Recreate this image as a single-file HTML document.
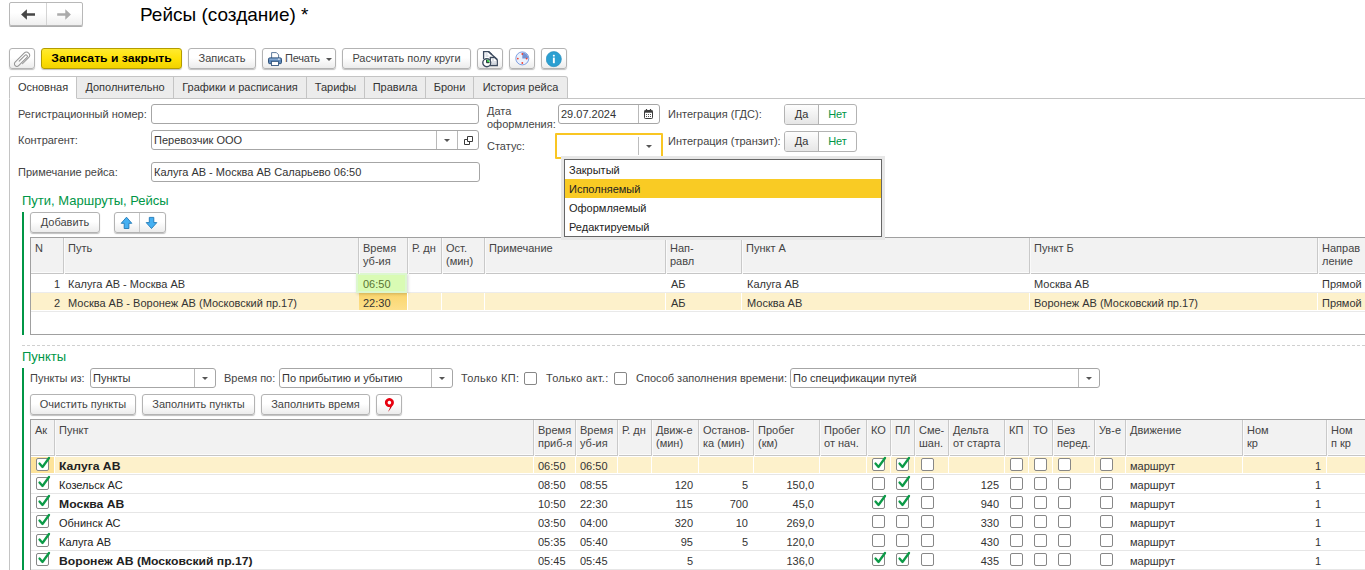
<!DOCTYPE html>
<html lang="ru"><head><meta charset="utf-8"><title>Рейсы (создание) *</title>
<style>
*{box-sizing:border-box;margin:0;padding:0}
html,body{width:1365px;height:570px;overflow:hidden;background:#fff}
body{font-family:"Liberation Sans",Arial,sans-serif;font-size:11px;color:#333;position:relative;line-height:13px}
.a{position:absolute;white-space:nowrap}
.btn{position:absolute;height:21px;border:1px solid #b3b3b3;border-radius:3px;background:linear-gradient(#fff,#fff 45%,#ececec);box-shadow:0 1px 1px rgba(0,0,0,.25);text-align:center;line-height:19px;white-space:nowrap;color:#444}
.inp{position:absolute;height:20px;border:1px solid #a6a6a6;border-radius:3px;background:#fff;line-height:18px;padding-left:2px;white-space:nowrap;color:#333}
.lbl{position:absolute;white-space:nowrap;color:#444}
.tab{position:absolute;top:76px;height:23px;border:1px solid #c4c4c4;border-left:none;background:#ececec;line-height:21px;text-align:center;color:#333}
.tab.act{background:#fff;border-left:1px solid #c4c4c4;border-bottom-color:#fff;border-radius:3px 0 0 0}
.grn{color:#009646;font-size:13px}
.dd{position:absolute;top:0;bottom:0;border-left:1px solid #b9b9b9}
.tri{position:absolute;width:0;height:0;border-left:3px solid transparent;border-right:3px solid transparent;border-top:3px solid #555}
.bx{display:inline-block;transform:scaleX(1.105);transform-origin:0 50%}
.cb{position:absolute;width:13px;height:13px;border:1px solid #878787;border-radius:2px;background:#fff}
</style></head><body>
<!-- SECTION: header -->
<div class="a" style="left:9px;top:2px;width:74px;height:24px;border:1px solid #b8b8b8;border-radius:2px;background:linear-gradient(#fff,#fff 45%,#efefef);box-shadow:0 1px 0 #adadad">
<div class="a" style="left:36px;top:0;bottom:0;width:1px;background:#d4d4d4"></div>
<svg class="a" style="left:11px;top:5px" width="15" height="13" viewBox="0 0 15 13"><path d="M.1 6.500L5.900 1.200V5.200H14V7.800H5.900V11.800z" fill="#464646"/></svg>
<svg class="a" style="left:47px;top:5px" width="15" height="13" viewBox="0 0 15 13"><path d="M13.900 6.500L8.300 1.200V5.200H.2V7.800H8.300V11.800z" fill="#ababab"/></svg>
</div>
<div class="a" style="left:140px;top:3px;font-size:19px;line-height:24px;color:#000">Рейсы (создание) *</div>
<!-- SECTION: toolbar -->
<div class="btn" style="left:9px;top:48px;width:26px">
<svg class="a" style="left:0;top:0" width="24" height="19" viewBox="0 0 24 19"><path transform="translate(7.400 15.300) rotate(-45)" d="M4 3.200L12.700 3.200A3.200 3.200 0 0 0 12.700 -3.200L0 -3.200A2.500 2.500 0 0 0 0 1.800L11.700 1.800A1.400 1.400 0 0 0 11.700 -1L3.500 -1" fill="none" stroke="#939393" stroke-width="1" stroke-linecap="round"/></svg>
</div>
<div class="btn" style="left:41px;top:48px;width:141px;background:linear-gradient(#ffea30,#ffe208 50%,#f1d200);border-color:#b39c00;color:#000;font-weight:bold"><span class="bx" style="transform-origin:50% 50%">Записать и закрыть</span></div>
<div class="btn" style="left:188px;top:48px;width:68px">Записать</div>
<div class="btn" style="left:262px;top:48px;width:74px;text-align:left;padding-left:22px;letter-spacing:-.2px">Печать<span class="tri" style="left:63px;top:9px"></span>
<svg class="a" style="left:4px;top:2px" width="16" height="16" viewBox="0 0 16 16"><path d="M4.600 7V1.600H9.400L11.600 3.800V7" fill="#fff" stroke="#4d6c92" stroke-width=".9"/><rect x="1.500" y="6.900" width="13" height="5.800" rx="1.300" fill="#5d88ba" stroke="#2d5079" stroke-width="1"/><path d="M2.600 8.200h10.800" stroke="#91b2d8" stroke-width="1"/><rect x="11.200" y="7.600" width="1.400" height="1" fill="#fff"/><rect x="4.500" y="10.400" width="7" height="4.100" fill="#fff" stroke="#34577f" stroke-width=".9"/></svg>
</div>
<div class="btn" style="left:342px;top:48px;width:129px">Расчитать полу круги</div>
<div class="btn" style="left:477px;top:48px;width:26px"><svg class="a" style="left:4px;top:2px" width="17" height="17" viewBox="0 0 17 17"><path d="M1.600 8V.700H6.800L10 3.800" fill="#fff" stroke="#3e4c60" stroke-width="1.300"/><path d="M6.600 .700L15.300 8.600" stroke="#3e4c60" stroke-width="1.400"/><path d="M8.300 6.500H12.700L15.300 9V14.500H8.300z" fill="#fff" stroke="#3e4c60" stroke-width="1.300"/><path d="M3.500 3h2M3.500 5h3M10 9h2M10 11h4M10 12.800h4" stroke="#a9b4c4" stroke-width=".8"/><circle cx="4.800" cy="11.700" r="4" fill="#fff" stroke="#3e4c60" stroke-width="1.400"/><path d="M4.600 11.700V8.600A3.100 3.100 0 0 1 7.700 11.700z" fill="#3fcf4f"/><path d="M4.600 8.800V11.700H7.400" fill="none" stroke="#1d2733" stroke-width="1"/></svg></div>
<div class="btn" style="left:509px;top:48px;width:26px"><svg class="a" style="left:4px;top:1px" width="17" height="17" viewBox="0 0 17 17"><circle cx="8.300" cy="8.400" r="6.500" fill="#eaf0fc" stroke="#7f9fe0" stroke-width="1"/><path d="M8.300 8.400V2.400A6 6 0 0 1 14.300 8.400z" fill="#7492d2"/><circle cx="8.300" cy="4" r=".9" fill="#f04030"/><circle cx="12.600" cy="8.600" r=".9" fill="#f04030"/><circle cx="8.300" cy="13" r=".9" fill="#f04030"/><circle cx="3.800" cy="8.600" r=".9" fill="#f04030"/></svg></div>
<div class="btn" style="left:541px;top:48px;width:26px"><svg class="a" style="left:4px;top:2px" width="17" height="17" viewBox="0 0 17 17"><circle cx="7.800" cy="8.100" r="7.600" fill="#2b9fd1" stroke="#2489b8" stroke-width=".6"/><rect x="6.900" y="6.600" width="1.900" height="5.600" fill="#fff"/><rect x="6.900" y="3.700" width="1.900" height="1.900" rx=".6" fill="#fff"/></svg></div>
<!-- SECTION: tabs -->
<div class="a" style="left:9px;top:98px;width:1356px;height:1px;background:#c4c4c4"></div>
<div class="a" style="left:9px;top:98px;width:1px;height:473px;background:#c4c4c4"></div>
<div class="tab act" style="left:9px;width:68px">Основная</div>
<div class="tab" style="left:77px;width:97px">Дополнительно</div>
<div class="tab" style="left:174px;width:133px">Графики и расписания</div>
<div class="tab" style="left:307px;width:58px">Тарифы</div>
<div class="tab" style="left:365px;width:61px">Правила</div>
<div class="tab" style="left:426px;width:48px">Брони</div>
<div class="tab" style="left:474px;width:94px;border-radius:0 3px 0 0">История рейса</div>
<!-- SECTION: form -->
<div class="lbl" style="left:18px;top:108px">Регистрационный номер:</div>
<div class="inp" style="left:151px;top:104px;width:328px"></div>
<div class="lbl" style="left:18px;top:134px">Контрагент:</div>
<div class="inp" style="left:151px;top:130px;width:328px">Перевозчик ООО
<div class="dd" style="left:284px;width:21px"><span class="tri" style="left:7px;top:8px"></span></div>
<div class="dd" style="left:305px;width:22px"><svg class="a" style="left:6px;top:4px" width="10" height="10" viewBox="0 0 10 10"><path d="M3.500 1.500h5v5h-5zM3.500 4.500H.5V9.500H5.500V6.500" fill="none" stroke="#3a3a3a" stroke-width="1"/></svg></div>
</div>
<div class="lbl" style="left:18px;top:166px">Примечание рейса:</div>
<div class="inp" style="left:151px;top:162px;width:329px">Калуга АВ - Москва АВ Саларьево 06:50</div>
<div class="lbl" style="left:487px;top:105px;line-height:13px">Дата<br>оформления:</div>
<div class="inp" style="left:558px;top:104px;width:102px;padding-left:2px">29.07.2024
<div class="dd" style="left:79px;width:22px"><svg class="a" style="left:5px;top:4px" width="9" height="10" viewBox="0 0 9 10"><rect x=".5" y="1.500" width="8" height="8" rx=".8" fill="#fff" stroke="#3c3c3c" stroke-width="1"/><rect x=".5" y="1.500" width="8" height="2.200" fill="#3c3c3c"/><path d="M2.500 0v2M6.500 0v2" stroke="#3c3c3c" stroke-width="1.200"/><path d="M2 5.500h1M4 5.500h1M6 5.500h1M2 7.500h1M4 7.500h1M6 7.500h1" stroke="#555" stroke-width="1"/></svg></div>
</div>
<div class="lbl" style="left:487px;top:140px">Статус:</div>
<div class="a" style="left:555px;top:133px;width:108px;height:26px;border:2px solid #f9c623;border-radius:1px;background:#fff">
<div class="dd" style="left:81px;top:2px;bottom:2px;width:22px;border-left-color:#bdbdbd"><span class="tri" style="left:7px;top:8px"></span></div>
</div>
<div class="lbl" style="left:668px;top:108px">Интеграция (ГДС):</div>
<div class="lbl" style="left:668px;top:135px">Интеграция (транзит):</div>
<div class="btn" style="left:784px;top:104px;width:73px;background:#fff;box-shadow:none"></div>
<div class="a" style="left:785px;top:105px;width:34px;height:19px;border-right:1px solid #b3b3b3;border-radius:2px 0 0 2px;background:linear-gradient(#fdfdfd,#e6e6e6);text-align:center;line-height:19px;color:#333">Да</div>
<div class="a" style="left:819px;top:105px;width:37px;height:19px;text-align:center;line-height:19px;color:#009646">Нет</div>
<div class="btn" style="left:784px;top:131px;width:73px;background:#fff;box-shadow:none"></div>
<div class="a" style="left:785px;top:132px;width:34px;height:19px;border-right:1px solid #b3b3b3;border-radius:2px 0 0 2px;background:linear-gradient(#fdfdfd,#e6e6e6);text-align:center;line-height:19px;color:#333">Да</div>
<div class="a" style="left:819px;top:132px;width:37px;height:19px;text-align:center;line-height:19px;color:#009646">Нет</div>
<!-- SECTION: routes -->
<div class="a grn" style="left:22px;top:193px;line-height:15px">Пути, Маршруты, Рейсы</div>
<div class="a" style="left:22px;top:212px;width:2px;height:123px;background:#009646"></div>
<div class="btn" style="left:30px;top:212px;width:70px">Добавить</div>
<div class="btn" style="left:114px;top:212px;width:52px"><div class="a" style="left:24px;top:0;bottom:0;width:1px;background:#c8c8c8"></div>
<svg class="a" style="left:5px;top:3px" width="14" height="14" viewBox="0 0 14 14"><path d="M6.500 1.200L11.800 7.300H8.900V12.500H4.200V7.300H1.200z" fill="#45b0f2" stroke="#1f78b6" stroke-width=".9" stroke-linejoin="miter"/></svg>
<svg class="a" style="left:30px;top:3px" width="14" height="14" viewBox="0 0 14 14"><path d="M6.500 12.500L11.800 6.600H8.800V1.400H4.300V6.600H1.200z" fill="#45b0f2" stroke="#1f78b6" stroke-width=".9" stroke-linejoin="miter"/></svg>
</div>
<div class="a" style="left:30px;top:237px;width:1335px;height:98px;border:1px solid #a0a0a0;border-right:none;background:#fff"></div>
<div class="a" style="left:31px;top:238px;width:1334px;height:36px;background:#f2f2f2;border-bottom:1px solid #c6c6c6"></div><div class="a" style="left:31px;top:272px;width:1334px;height:1px;background:#fbfbfb"></div>
<div class="a" style="left:31px;top:292px;width:1334px;height:1px;background:#ececec"></div>
<div class="a" style="left:31px;top:293px;width:1334px;height:17px;background:#fdf1cb"></div>
<div class="a" style="left:31px;top:311px;width:1334px;height:1px;background:#e9e9e9"></div>
<div class="a" style="left:359px;top:293px;width:48px;height:17px;background:linear-gradient(#fad56c,#fde08c)"></div>
<div class="a" style="left:356px;top:273px;width:51px;height:20px;background:#dcf7cf;box-shadow:1px 1px 3px rgba(0,0,0,.18)"></div>
<div class="a" style="left:358px;top:275px;width:47px;height:16px;background:#d9fbb4"></div>
<div class="a" style="left:35px;top:242px;line-height:13px;color:#444">N</div>
<div class="a" style="left:63px;top:238px;width:1px;height:36px;background:#c9c9c9"></div><div class="a" style="left:64px;top:238px;width:1px;height:36px;background:#fafafa"></div><div class="a" style="left:68px;top:242px;line-height:13px;color:#444">Путь</div>
<div class="a" style="left:358px;top:238px;width:1px;height:36px;background:#c9c9c9"></div><div class="a" style="left:359px;top:238px;width:1px;height:36px;background:#fafafa"></div><div class="a" style="left:363px;top:242px;line-height:13px;color:#444">Время<br>уб-ия</div>
<div class="a" style="left:407px;top:238px;width:1px;height:36px;background:#c9c9c9"></div><div class="a" style="left:408px;top:238px;width:1px;height:36px;background:#fafafa"></div><div class="a" style="left:412px;top:242px;line-height:13px;color:#444">Р. дн</div>
<div class="a" style="left:441px;top:238px;width:1px;height:36px;background:#c9c9c9"></div><div class="a" style="left:442px;top:238px;width:1px;height:36px;background:#fafafa"></div><div class="a" style="left:446px;top:242px;line-height:13px;color:#444">Ост.<br>(мин)</div>
<div class="a" style="left:484px;top:238px;width:1px;height:36px;background:#c9c9c9"></div><div class="a" style="left:485px;top:238px;width:1px;height:36px;background:#fafafa"></div><div class="a" style="left:489px;top:242px;line-height:13px;color:#444">Примечание</div>
<div class="a" style="left:665px;top:238px;width:1px;height:36px;background:#c9c9c9"></div><div class="a" style="left:666px;top:238px;width:1px;height:36px;background:#fafafa"></div><div class="a" style="left:670px;top:242px;line-height:13px;color:#444">Нап-<br>равл</div>
<div class="a" style="left:741px;top:238px;width:1px;height:36px;background:#c9c9c9"></div><div class="a" style="left:742px;top:238px;width:1px;height:36px;background:#fafafa"></div><div class="a" style="left:746px;top:242px;line-height:13px;color:#444">Пункт А</div>
<div class="a" style="left:1029px;top:238px;width:1px;height:36px;background:#c9c9c9"></div><div class="a" style="left:1030px;top:238px;width:1px;height:36px;background:#fafafa"></div><div class="a" style="left:1034px;top:242px;line-height:13px;color:#444">Пункт Б</div>
<div class="a" style="left:1317px;top:238px;width:1px;height:36px;background:#c9c9c9"></div><div class="a" style="left:1318px;top:238px;width:1px;height:36px;background:#fafafa"></div><div class="a" style="left:1322px;top:242px;line-height:13px;color:#444">Направ<br>ление</div>
<div class="a" style="left:31px;width:29px;top:278px;text-align:right">1</div><div class="a" style="left:68px;top:278px">Калуга АВ - Москва АВ</div><div class="a" style="left:363px;top:278px;color:#5b7431">06:50</div><div class="a" style="left:671px;top:278px">АБ</div><div class="a" style="left:747px;top:278px">Калуга АВ</div><div class="a" style="left:1034px;top:278px">Москва АВ</div><div class="a" style="left:1322px;top:278px">Прямой</div>
<div class="a" style="left:31px;width:29px;top:297px;text-align:right">2</div><div class="a" style="left:68px;top:297px">Москва АВ - Воронеж АВ (Московский пр.17)</div><div class="a" style="left:363px;top:297px">22:30</div><div class="a" style="left:671px;top:297px">АБ</div><div class="a" style="left:747px;top:297px">Москва АВ</div><div class="a" style="left:1034px;top:297px">Воронеж АВ (Московский пр.17)</div><div class="a" style="left:1322px;top:297px">Прямой</div>
<div class="a" style="left:407px;top:293px;width:1px;height:17px;background:#fff"></div><div class="a" style="left:441px;top:293px;width:1px;height:17px;background:#fff"></div><div class="a" style="left:484px;top:293px;width:1px;height:17px;background:#fff"></div><div class="a" style="left:665px;top:293px;width:1px;height:17px;background:#fff"></div><div class="a" style="left:741px;top:293px;width:1px;height:17px;background:#fff"></div><div class="a" style="left:1029px;top:293px;width:1px;height:17px;background:#fff"></div><div class="a" style="left:1317px;top:293px;width:1px;height:17px;background:#fff"></div>
<div class="a" style="left:22px;top:345px;width:1343px;height:0;border-top:1px dashed #d0d0d0"></div>
<!-- SECTION: points -->
<div class="a grn" style="left:22px;top:349px;line-height:15px">Пункты</div>
<div class="a" style="left:22px;top:368px;width:2px;height:202px;background:#009646"></div>
<div class="lbl" style="left:30px;top:372px">Пункты из:</div>
<div class="inp" style="left:90px;top:368px;width:126px;height:20px;line-height:19px">Пункты<div class="dd" style="left:103px;width:22px"><span class="tri" style="left:7px;top:8px"></span></div></div>
<div class="lbl" style="left:224px;top:372px">Время по:</div>
<div class="inp" style="left:279px;top:368px;width:174px;height:20px;line-height:19px">По прибытию и убытию<div class="dd" style="left:151px;width:22px"><span class="tri" style="left:7px;top:8px"></span></div></div>
<div class="lbl" style="left:461px;top:372px;letter-spacing:.3px">Только КП:</div>
<div class="cb" style="left:524px;top:372px"></div>
<div class="lbl" style="left:546px;top:372px;letter-spacing:.3px">Только акт.:</div>
<div class="cb" style="left:614px;top:372px"></div>
<div class="lbl" style="left:636px;top:372px">Способ заполнения времени:</div>
<div class="inp" style="left:790px;top:368px;width:310px;height:20px;line-height:19px">По спецификации путей<div class="dd" style="left:287px;width:22px"><span class="tri" style="left:7px;top:8px"></span></div></div>
<div class="btn" style="left:30px;top:394px;width:106px">Очистить пункты</div>
<div class="btn" style="left:142px;top:394px;width:113px">Заполнить пункты</div>
<div class="btn" style="left:261px;top:394px;width:109px">Заполнить время</div>
<div class="btn" style="left:376px;top:394px;width:26px"><svg class="a" style="left:0;top:0" width="24" height="19" viewBox="0 0 24 19"><path d="M15.400 9.800C14.600 12.500 13.200 14.800 10.900 17C12.300 14.500 12.900 13 13 11.500z" fill="#c4000c"/><path d="M12.400 3.100a4.500 4.500 0 1 0 .01 0zM12.400 5.800a1.800 1.800 0 1 1-.01 0z" fill="#e8000f" fill-rule="evenodd"/></svg></div>
<div class="a" style="left:30px;top:419px;width:1335px;height:160px;border:1px solid #a0a0a0;border-right:none;background:#fff"></div>
<div class="a" style="left:31px;top:420px;width:1334px;height:36px;background:#f2f2f2;border-bottom:1px solid #c6c6c6"></div><div class="a" style="left:31px;top:454px;width:1334px;height:1px;background:#fbfbfb"></div>
<div class="a" style="left:31px;top:457px;width:1334px;height:16px;background:#fdf1cb"></div><div class="a" style="left:31px;top:457px;width:23px;height:16px;background:#fde39a"></div><div class="a" style="left:31px;top:474px;width:1334px;height:1px;background:#e6e6e6"></div>
<div class="a" style="left:35px;top:424px;line-height:13px;color:#444">Ак</div>
<div class="a" style="left:54px;top:420px;width:1px;height:36px;background:#c9c9c9"></div><div class="a" style="left:55px;top:420px;width:1px;height:36px;background:#fafafa"></div><div class="a" style="left:59px;top:424px;line-height:13px;color:#444">Пункт</div>
<div class="a" style="left:533px;top:420px;width:1px;height:36px;background:#c9c9c9"></div><div class="a" style="left:534px;top:420px;width:1px;height:36px;background:#fafafa"></div><div class="a" style="left:538px;top:424px;line-height:13px;color:#444">Время<br>приб-я</div>
<div class="a" style="left:575px;top:420px;width:1px;height:36px;background:#c9c9c9"></div><div class="a" style="left:576px;top:420px;width:1px;height:36px;background:#fafafa"></div><div class="a" style="left:580px;top:424px;line-height:13px;color:#444">Время<br>уб-ия</div>
<div class="a" style="left:617px;top:420px;width:1px;height:36px;background:#c9c9c9"></div><div class="a" style="left:618px;top:420px;width:1px;height:36px;background:#fafafa"></div><div class="a" style="left:622px;top:424px;line-height:13px;color:#444">Р. дн</div>
<div class="a" style="left:651px;top:420px;width:1px;height:36px;background:#c9c9c9"></div><div class="a" style="left:652px;top:420px;width:1px;height:36px;background:#fafafa"></div><div class="a" style="left:656px;top:424px;line-height:13px;color:#444">Движ-е<br>(мин)</div>
<div class="a" style="left:698px;top:420px;width:1px;height:36px;background:#c9c9c9"></div><div class="a" style="left:699px;top:420px;width:1px;height:36px;background:#fafafa"></div><div class="a" style="left:703px;top:424px;line-height:13px;color:#444">Останов-<br>ка (мин)</div>
<div class="a" style="left:753px;top:420px;width:1px;height:36px;background:#c9c9c9"></div><div class="a" style="left:754px;top:420px;width:1px;height:36px;background:#fafafa"></div><div class="a" style="left:758px;top:424px;line-height:13px;color:#444">Пробег<br>(км)</div>
<div class="a" style="left:819px;top:420px;width:1px;height:36px;background:#c9c9c9"></div><div class="a" style="left:820px;top:420px;width:1px;height:36px;background:#fafafa"></div><div class="a" style="left:824px;top:424px;line-height:13px;color:#444">Пробег<br>от нач.</div>
<div class="a" style="left:866px;top:420px;width:1px;height:36px;background:#c9c9c9"></div><div class="a" style="left:867px;top:420px;width:1px;height:36px;background:#fafafa"></div><div class="a" style="left:871px;top:424px;line-height:13px;color:#444">КО</div>
<div class="a" style="left:890px;top:420px;width:1px;height:36px;background:#c9c9c9"></div><div class="a" style="left:891px;top:420px;width:1px;height:36px;background:#fafafa"></div><div class="a" style="left:895px;top:424px;line-height:13px;color:#444">ПЛ</div>
<div class="a" style="left:914px;top:420px;width:1px;height:36px;background:#c9c9c9"></div><div class="a" style="left:915px;top:420px;width:1px;height:36px;background:#fafafa"></div><div class="a" style="left:919px;top:424px;line-height:13px;color:#444">Сме-<br>шан.</div>
<div class="a" style="left:948px;top:420px;width:1px;height:36px;background:#c9c9c9"></div><div class="a" style="left:949px;top:420px;width:1px;height:36px;background:#fafafa"></div><div class="a" style="left:953px;top:424px;line-height:13px;color:#444">Дельта<br>от старта</div>
<div class="a" style="left:1004px;top:420px;width:1px;height:36px;background:#c9c9c9"></div><div class="a" style="left:1005px;top:420px;width:1px;height:36px;background:#fafafa"></div><div class="a" style="left:1009px;top:424px;line-height:13px;color:#444">КП</div>
<div class="a" style="left:1028px;top:420px;width:1px;height:36px;background:#c9c9c9"></div><div class="a" style="left:1029px;top:420px;width:1px;height:36px;background:#fafafa"></div><div class="a" style="left:1033px;top:424px;line-height:13px;color:#444">ТО</div>
<div class="a" style="left:1052px;top:420px;width:1px;height:36px;background:#c9c9c9"></div><div class="a" style="left:1053px;top:420px;width:1px;height:36px;background:#fafafa"></div><div class="a" style="left:1057px;top:424px;line-height:13px;color:#444">Без<br>перед.</div>
<div class="a" style="left:1094px;top:420px;width:1px;height:36px;background:#c9c9c9"></div><div class="a" style="left:1095px;top:420px;width:1px;height:36px;background:#fafafa"></div><div class="a" style="left:1099px;top:424px;line-height:13px;color:#444">Ув-е</div>
<div class="a" style="left:1125px;top:420px;width:1px;height:36px;background:#c9c9c9"></div><div class="a" style="left:1126px;top:420px;width:1px;height:36px;background:#fafafa"></div><div class="a" style="left:1130px;top:424px;line-height:13px;color:#444">Движение</div>
<div class="a" style="left:1242px;top:420px;width:1px;height:36px;background:#c9c9c9"></div><div class="a" style="left:1243px;top:420px;width:1px;height:36px;background:#fafafa"></div><div class="a" style="left:1247px;top:424px;line-height:13px;color:#444">Ном<br>кр</div>
<div class="a" style="left:1326px;top:420px;width:1px;height:36px;background:#c9c9c9"></div><div class="a" style="left:1327px;top:420px;width:1px;height:36px;background:#fafafa"></div><div class="a" style="left:1331px;top:424px;line-height:13px;color:#444">Ном<br>п кр</div>
<div class="a" style="left:54px;top:457px;width:1px;height:16px;background:#fff"></div><div class="a" style="left:533px;top:457px;width:1px;height:16px;background:#fff"></div><div class="a" style="left:575px;top:457px;width:1px;height:16px;background:#fff"></div><div class="a" style="left:617px;top:457px;width:1px;height:16px;background:#fff"></div><div class="a" style="left:651px;top:457px;width:1px;height:16px;background:#fff"></div><div class="a" style="left:698px;top:457px;width:1px;height:16px;background:#fff"></div><div class="a" style="left:753px;top:457px;width:1px;height:16px;background:#fff"></div><div class="a" style="left:819px;top:457px;width:1px;height:16px;background:#fff"></div><div class="a" style="left:866px;top:457px;width:1px;height:16px;background:#fff"></div><div class="a" style="left:890px;top:457px;width:1px;height:16px;background:#fff"></div><div class="a" style="left:914px;top:457px;width:1px;height:16px;background:#fff"></div><div class="a" style="left:948px;top:457px;width:1px;height:16px;background:#fff"></div><div class="a" style="left:1004px;top:457px;width:1px;height:16px;background:#fff"></div><div class="a" style="left:1028px;top:457px;width:1px;height:16px;background:#fff"></div><div class="a" style="left:1052px;top:457px;width:1px;height:16px;background:#fff"></div><div class="a" style="left:1094px;top:457px;width:1px;height:16px;background:#fff"></div><div class="a" style="left:1125px;top:457px;width:1px;height:16px;background:#fff"></div><div class="a" style="left:1242px;top:457px;width:1px;height:16px;background:#fff"></div><div class="a" style="left:1326px;top:457px;width:1px;height:16px;background:#fff"></div>
<div class="cb" style="left:36px;top:458px"><svg class="a" style="left:0;top:-3px" width="14" height="14" viewBox="0 0 14 14"><path d="M2.500 7.500L5.500 11L12 2" fill="none" stroke="#0c9a47" stroke-width="2.300" stroke-linecap="round" stroke-linejoin="round"/></svg></div><div class="a" style="left:59px;top:460px;font-weight:bold;color:#222"><span class="bx">Калуга АВ</span></div><div class="a" style="left:538px;top:460px">06:50</div><div class="a" style="left:580px;top:460px">06:50</div><div class="cb" style="left:872px;top:458px"><svg class="a" style="left:0;top:-3px" width="14" height="14" viewBox="0 0 14 14"><path d="M2.500 7.500L5.500 11L12 2" fill="none" stroke="#0c9a47" stroke-width="2.300" stroke-linecap="round" stroke-linejoin="round"/></svg></div><div class="cb" style="left:896px;top:458px"><svg class="a" style="left:0;top:-3px" width="14" height="14" viewBox="0 0 14 14"><path d="M2.500 7.500L5.500 11L12 2" fill="none" stroke="#0c9a47" stroke-width="2.300" stroke-linecap="round" stroke-linejoin="round"/></svg></div><div class="cb" style="left:921px;top:458px"></div><div class="cb" style="left:1010px;top:458px"></div><div class="cb" style="left:1034px;top:458px"></div><div class="cb" style="left:1058px;top:458px"></div><div class="cb" style="left:1100px;top:458px"></div><div class="a" style="left:1130px;top:460px">маршрут</div><div class="a" style="left:1242px;width:79px;top:460px;text-align:right">1</div>
<div class="a" style="left:31px;top:493px;width:1334px;height:1px;background:#e6e6e6"></div><div class="cb" style="left:36px;top:477px"><svg class="a" style="left:0;top:-3px" width="14" height="14" viewBox="0 0 14 14"><path d="M2.500 7.500L5.500 11L12 2" fill="none" stroke="#0c9a47" stroke-width="2.300" stroke-linecap="round" stroke-linejoin="round"/></svg></div><div class="a" style="left:59px;top:479px;color:#222">Козельск АС</div><div class="a" style="left:538px;top:479px">08:50</div><div class="a" style="left:580px;top:479px">08:55</div><div class="a" style="left:651px;width:42px;top:479px;text-align:right">120</div><div class="a" style="left:698px;width:50px;top:479px;text-align:right">5</div><div class="a" style="left:753px;width:61px;top:479px;text-align:right">150,0</div><div class="a" style="left:948px;width:51px;top:479px;text-align:right">125</div><div class="cb" style="left:872px;top:477px"></div><div class="cb" style="left:896px;top:477px"><svg class="a" style="left:0;top:-3px" width="14" height="14" viewBox="0 0 14 14"><path d="M2.500 7.500L5.500 11L12 2" fill="none" stroke="#0c9a47" stroke-width="2.300" stroke-linecap="round" stroke-linejoin="round"/></svg></div><div class="cb" style="left:921px;top:477px"></div><div class="cb" style="left:1010px;top:477px"></div><div class="cb" style="left:1034px;top:477px"></div><div class="cb" style="left:1058px;top:477px"></div><div class="cb" style="left:1100px;top:477px"></div><div class="a" style="left:1130px;top:479px">маршрут</div><div class="a" style="left:1242px;width:79px;top:479px;text-align:right">1</div>
<div class="a" style="left:31px;top:512px;width:1334px;height:1px;background:#e6e6e6"></div><div class="cb" style="left:36px;top:496px"><svg class="a" style="left:0;top:-3px" width="14" height="14" viewBox="0 0 14 14"><path d="M2.500 7.500L5.500 11L12 2" fill="none" stroke="#0c9a47" stroke-width="2.300" stroke-linecap="round" stroke-linejoin="round"/></svg></div><div class="a" style="left:59px;top:498px;font-weight:bold;color:#222"><span class="bx">Москва АВ</span></div><div class="a" style="left:538px;top:498px">10:50</div><div class="a" style="left:580px;top:498px">22:30</div><div class="a" style="left:651px;width:42px;top:498px;text-align:right">115</div><div class="a" style="left:698px;width:50px;top:498px;text-align:right">700</div><div class="a" style="left:753px;width:61px;top:498px;text-align:right">45,0</div><div class="a" style="left:948px;width:51px;top:498px;text-align:right">940</div><div class="cb" style="left:872px;top:496px"><svg class="a" style="left:0;top:-3px" width="14" height="14" viewBox="0 0 14 14"><path d="M2.500 7.500L5.500 11L12 2" fill="none" stroke="#0c9a47" stroke-width="2.300" stroke-linecap="round" stroke-linejoin="round"/></svg></div><div class="cb" style="left:896px;top:496px"><svg class="a" style="left:0;top:-3px" width="14" height="14" viewBox="0 0 14 14"><path d="M2.500 7.500L5.500 11L12 2" fill="none" stroke="#0c9a47" stroke-width="2.300" stroke-linecap="round" stroke-linejoin="round"/></svg></div><div class="cb" style="left:921px;top:496px"></div><div class="cb" style="left:1010px;top:496px"></div><div class="cb" style="left:1034px;top:496px"></div><div class="cb" style="left:1058px;top:496px"></div><div class="cb" style="left:1100px;top:496px"></div><div class="a" style="left:1130px;top:498px">маршрут</div><div class="a" style="left:1242px;width:79px;top:498px;text-align:right">1</div>
<div class="a" style="left:31px;top:531px;width:1334px;height:1px;background:#e6e6e6"></div><div class="cb" style="left:36px;top:515px"><svg class="a" style="left:0;top:-3px" width="14" height="14" viewBox="0 0 14 14"><path d="M2.500 7.500L5.500 11L12 2" fill="none" stroke="#0c9a47" stroke-width="2.300" stroke-linecap="round" stroke-linejoin="round"/></svg></div><div class="a" style="left:59px;top:517px;color:#222">Обнинск АС</div><div class="a" style="left:538px;top:517px">03:50</div><div class="a" style="left:580px;top:517px">04:00</div><div class="a" style="left:651px;width:42px;top:517px;text-align:right">320</div><div class="a" style="left:698px;width:50px;top:517px;text-align:right">10</div><div class="a" style="left:753px;width:61px;top:517px;text-align:right">269,0</div><div class="a" style="left:948px;width:51px;top:517px;text-align:right">330</div><div class="cb" style="left:872px;top:515px"></div><div class="cb" style="left:896px;top:515px"></div><div class="cb" style="left:921px;top:515px"></div><div class="cb" style="left:1010px;top:515px"></div><div class="cb" style="left:1034px;top:515px"></div><div class="cb" style="left:1058px;top:515px"></div><div class="cb" style="left:1100px;top:515px"></div><div class="a" style="left:1130px;top:517px">маршрут</div><div class="a" style="left:1242px;width:79px;top:517px;text-align:right">1</div>
<div class="a" style="left:31px;top:550px;width:1334px;height:1px;background:#e6e6e6"></div><div class="cb" style="left:36px;top:534px"><svg class="a" style="left:0;top:-3px" width="14" height="14" viewBox="0 0 14 14"><path d="M2.500 7.500L5.500 11L12 2" fill="none" stroke="#0c9a47" stroke-width="2.300" stroke-linecap="round" stroke-linejoin="round"/></svg></div><div class="a" style="left:59px;top:536px;color:#222">Калуга АВ</div><div class="a" style="left:538px;top:536px">05:35</div><div class="a" style="left:580px;top:536px">05:40</div><div class="a" style="left:651px;width:42px;top:536px;text-align:right">95</div><div class="a" style="left:698px;width:50px;top:536px;text-align:right">5</div><div class="a" style="left:753px;width:61px;top:536px;text-align:right">120,0</div><div class="a" style="left:948px;width:51px;top:536px;text-align:right">430</div><div class="cb" style="left:872px;top:534px"></div><div class="cb" style="left:896px;top:534px"></div><div class="cb" style="left:921px;top:534px"></div><div class="cb" style="left:1010px;top:534px"></div><div class="cb" style="left:1034px;top:534px"></div><div class="cb" style="left:1058px;top:534px"></div><div class="cb" style="left:1100px;top:534px"></div><div class="a" style="left:1130px;top:536px">маршрут</div><div class="a" style="left:1242px;width:79px;top:536px;text-align:right">1</div>
<div class="a" style="left:31px;top:569px;width:1334px;height:1px;background:#e6e6e6"></div><div class="cb" style="left:36px;top:553px"><svg class="a" style="left:0;top:-3px" width="14" height="14" viewBox="0 0 14 14"><path d="M2.500 7.500L5.500 11L12 2" fill="none" stroke="#0c9a47" stroke-width="2.300" stroke-linecap="round" stroke-linejoin="round"/></svg></div><div class="a" style="left:59px;top:555px;font-weight:bold;color:#222"><span class="bx">Воронеж АВ (Московский пр.17)</span></div><div class="a" style="left:538px;top:555px">05:45</div><div class="a" style="left:580px;top:555px">05:45</div><div class="a" style="left:651px;width:42px;top:555px;text-align:right">5</div><div class="a" style="left:753px;width:61px;top:555px;text-align:right">136,0</div><div class="a" style="left:948px;width:51px;top:555px;text-align:right">435</div><div class="cb" style="left:872px;top:553px"><svg class="a" style="left:0;top:-3px" width="14" height="14" viewBox="0 0 14 14"><path d="M2.500 7.500L5.500 11L12 2" fill="none" stroke="#0c9a47" stroke-width="2.300" stroke-linecap="round" stroke-linejoin="round"/></svg></div><div class="cb" style="left:896px;top:553px"><svg class="a" style="left:0;top:-3px" width="14" height="14" viewBox="0 0 14 14"><path d="M2.500 7.500L5.500 11L12 2" fill="none" stroke="#0c9a47" stroke-width="2.300" stroke-linecap="round" stroke-linejoin="round"/></svg></div><div class="cb" style="left:921px;top:553px"></div><div class="cb" style="left:1010px;top:553px"></div><div class="cb" style="left:1034px;top:553px"></div><div class="cb" style="left:1058px;top:553px"></div><div class="cb" style="left:1100px;top:553px"></div><div class="a" style="left:1130px;top:555px">маршрут</div><div class="a" style="left:1242px;width:79px;top:555px;text-align:right">1</div>
<!-- SECTION: dropdown -->
<div class="a" style="left:564px;top:159px;width:318px;height:78px;border:1px solid #666;background:#fff;box-shadow:0 0 0 3px #e7e7e7"></div>
<div class="a" style="left:565px;top:179px;width:316px;height:19px;background:#f9cb24"></div>
<div class="a" style="left:569px;top:164px;color:#222">Закрытый</div>
<div class="a" style="left:569px;top:183px;color:#222">Исполняемый</div>
<div class="a" style="left:569px;top:202px;color:#222">Оформляемый</div>
<div class="a" style="left:569px;top:221px;color:#222">Редактируемый</div>
</body></html>
